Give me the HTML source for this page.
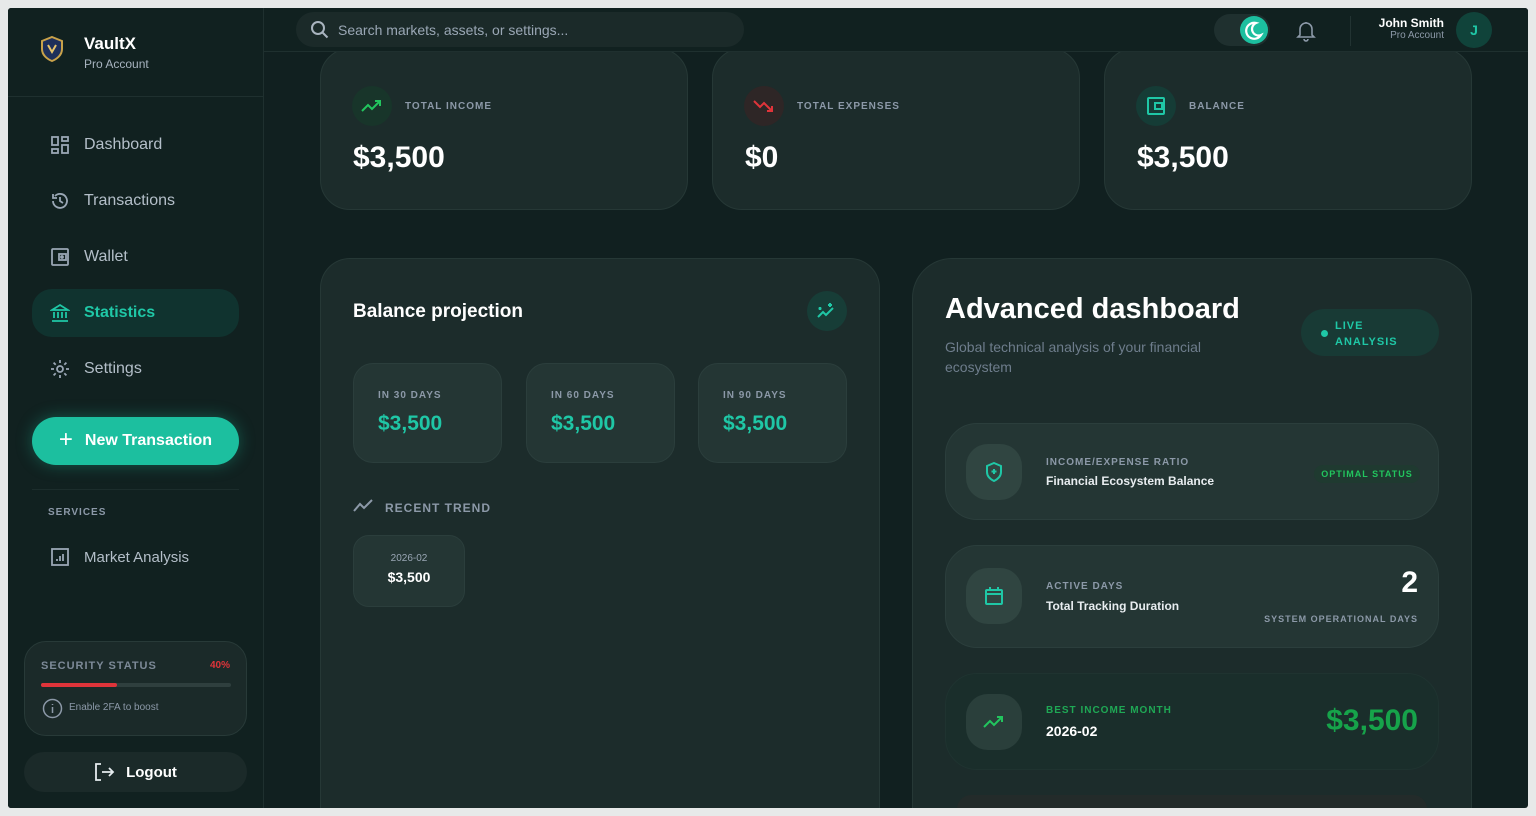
<!DOCTYPE html>
<html><head><meta charset="utf-8"><style>
*{box-sizing:border-box;margin:0;padding:0}
body{width:1536px;height:816px;background:#e7e9e9;font-family:"Liberation Sans",sans-serif;position:relative;overflow:hidden;color:#fff}
.app{position:absolute;left:8px;top:8px;width:1520px;height:800px;background:#112020;overflow:hidden;border-radius:3px}
.a{position:absolute}
.side{left:0;top:0;width:256px;height:800px;background:#112120;border-right:1px solid #1f302f}
.nav{position:absolute;left:24px;width:207px;height:48px;border-radius:20px;display:flex;align-items:center;padding-left:18px;font-size:16px;color:#b4bfc9}
.nav svg{margin-right:14px}
.card{position:absolute;background:#1c2c2b;border:1px solid #263836;border-radius:30px}
.lbl{font-size:10px;font-weight:bold;letter-spacing:1px;color:#8c99a8}
.ic{position:absolute;border-radius:50%;display:flex;align-items:center;justify-content:center}
.sub{position:absolute;background:#243634;border:1px solid #2b3e3c;border-radius:20px}
</style></head><body>
<div class="app">
<div class="a side">
  <svg class="a" style="left:32px;top:28px" width="24" height="26" viewBox="0 0 24 26"><path d="M12 1 L22 5 V13 C22 19 17 23 12 25 C7 23 2 19 2 13 V5Z" fill="#1e2f5a" stroke="#c9a24a" stroke-width="2"/><path d="M8 9 L12 16 L16 9" fill="none" stroke="#e6c36a" stroke-width="2"/></svg>
  <div class="a" style="left:76px;top:26px;font-size:17px;font-weight:bold">VaultX</div>
  <div class="a" style="left:76px;top:49px;font-size:12px;color:#a7b3bf">Pro Account</div>
  <div class="a" style="left:0;top:88px;width:256px;border-top:1px solid #1f302f"></div>
  <div class="nav" style="top:113px"><svg width="20" height="20" viewBox="0 0 20 20" fill="none" stroke="#9aa7b5" stroke-width="1.8"><rect x="2" y="2" width="6" height="8"/><rect x="12" y="2" width="6" height="4"/><rect x="2" y="14" width="6" height="4"/><rect x="12" y="10" width="6" height="8"/></svg>Dashboard</div>
  <div class="nav" style="top:169px"><svg width="20" height="20" viewBox="0 0 20 20" fill="none" stroke="#9aa7b5" stroke-width="1.8"><path d="M3 10a7 7 0 1 0 2-5M3 3v4h4M10 6v4l3 2"/></svg>Transactions</div>
  <div class="nav" style="top:225px"><svg width="20" height="20" viewBox="0 0 20 20" fill="none" stroke="#9aa7b5" stroke-width="1.8"><rect x="2" y="2" width="16" height="16" rx="1"/><rect x="9" y="7" width="7" height="6"/><circle cx="12" cy="10" r="1"/></svg>Wallet</div>
  <div class="nav" style="top:281px;background:#10332f;color:#1fc7a6;font-weight:bold"><svg width="20" height="20" viewBox="0 0 20 20" fill="none" stroke="#1fc7a6" stroke-width="1.8"><path d="M2 7 L10 2 L18 7Z M4 9v6M8 9v6M12 9v6M16 9v6M2 18h16"/></svg>Statistics</div>
  <div class="nav" style="top:337px"><svg width="20" height="20" viewBox="0 0 20 20" fill="none" stroke="#9aa7b5" stroke-width="1.8"><circle cx="10" cy="10" r="3"/><path d="M10 1v3M10 16v3M1 10h3M16 10h3M3.6 3.6l2.1 2.1M14.3 14.3l2.1 2.1M3.6 16.4l2.1-2.1M14.3 5.7l2.1-2.1"/></svg>Settings</div>
  <div class="a" style="left:24px;top:409px;width:207px;height:48px;border-radius:24px;background:#1cbf9f;box-shadow:0 0 16px rgba(28,191,159,.35);display:flex;align-items:center;justify-content:center;font-size:16px;font-weight:bold"><span style="font-size:24px;font-weight:normal;margin-right:12px;margin-top:-3px">+</span>New Transaction</div>
  <div class="a" style="left:24px;top:481px;width:207px;border-top:1px solid #1c2d2c"></div>
  <div class="a lbl" style="left:40px;top:499px;font-size:10px">SERVICES</div>
  <div class="nav" style="top:525px;font-size:15px"><svg width="20" height="20" viewBox="0 0 20 20" fill="none" stroke="#9aa7b5" stroke-width="1.8"><rect x="2" y="2" width="16" height="16"/><path d="M7 14v-2M10 14v-5M13 14V7"/></svg>Market Analysis</div>
  <div class="a" style="left:16px;top:633px;width:223px;height:95px;border-radius:22px;background:#1b2a29;border:1px solid #283a38">
    <div class="a lbl" style="left:16px;top:18px;font-size:11px;color:#7d8a98">SECURITY STATUS</div>
    <div class="a" style="right:16px;top:18px;font-size:10px;font-weight:bold;color:#e0343a">40%</div>
    <div class="a" style="left:16px;top:41px;width:190px;height:4px;border-radius:2px;background:#2f3f3e"><div style="width:40%;height:4px;border-radius:2px;background:#e0343a"></div></div>
    <svg class="a" style="left:17px;top:56px" width="21" height="21" viewBox="0 0 21 21" fill="none" stroke="#8c99a8" stroke-width="1.5"><circle cx="10.5" cy="10.5" r="9"/><path d="M10.5 9v6M10.5 6v1"/></svg>
    <div class="a" style="left:44px;top:60px;font-size:10px;color:#8c99a8">Enable 2FA to boost</div>
  </div>
  <div class="a" style="left:16px;top:744px;width:223px;height:40px;border-radius:20px;background:#1b2a29;display:flex;align-items:center;justify-content:center;font-size:15px;font-weight:bold">
    <svg width="22" height="20" viewBox="0 0 22 20" fill="none" stroke="#e6ecef" stroke-width="1.8" style="margin-right:10px"><path d="M7 2H2v16h5M8 10h11M15 6l4 4-4 4"/></svg>Logout</div>
</div>
<div class="a" style="left:256px;top:0;width:1264px;height:44px;background:#112120;border-bottom:1px solid #1f302f;z-index:2">
  <div class="a" style="left:32px;top:4px;width:448px;height:35px;border-radius:18px;background:#1b2a29;display:flex;align-items:center;padding-left:14px;font-size:14px;color:#9aa7b5">
    <svg width="20" height="20" viewBox="0 0 20 20" fill="none" stroke="#a9b4bf" stroke-width="2" style="margin-right:8px"><circle cx="8" cy="8" r="6"/><path d="M12.5 12.5l5 5"/></svg>Search markets, assets, or settings...</div>
  <div class="a" style="left:950px;top:6px;width:56px;height:32px;border-radius:16px;background:#1f302f"></div>
  <div class="a" style="left:976px;top:8px;width:28px;height:28px;border-radius:50%;background:#1cbf9f"><svg width="28" height="28" viewBox="0 0 28 28"><path d="M16 7a8 8 0 1 0 5 12a6.5 6.5 0 0 1-5-12z" fill="none" stroke="#fff" stroke-width="2.2"/></svg></div>
  <svg class="a" style="left:1032px;top:12px" width="20" height="22" viewBox="0 0 20 22" fill="none" stroke="#8c99a8" stroke-width="1.6"><path d="M4 15V9a6 6 0 0 1 12 0v6l2 2H2z M8 19a2 2 0 0 0 4 0M10 2v1"/></svg>
  <div class="a" style="left:1086px;top:8px;height:30px;border-left:1px solid #223332"></div>
  <div class="a" style="right:84px;top:8px;font-size:12px;font-weight:bold;text-align:right">John Smith</div>
  <div class="a" style="right:84px;top:22px;font-size:10px;color:#8c99a8;text-align:right">Pro Account</div>
  <div class="a" style="left:1192px;top:4px;width:36px;height:36px;border-radius:50%;background:#10433a;color:#1fc7a6;font-weight:bold;font-size:14px;display:flex;align-items:center;justify-content:center">J</div>
</div>
<div class="card" style="left:312px;top:40px;width:368px;height:162px">
  <div class="ic" style="left:31px;top:37px;width:40px;height:40px;background:#18352a"><svg width="22" height="14" viewBox="0 0 22 14" fill="none" stroke="#22c55e" stroke-width="2"><path d="M1 12l6-6 4 4 8-8M14 2h5v5"/></svg></div>
  <div class="a lbl" style="left:84px;top:52px">TOTAL INCOME</div>
  <div class="a" style="left:32px;top:92px;font-size:30px;font-weight:bold">$3,500</div>
</div>
<div class="card" style="left:704px;top:40px;width:368px;height:162px">
  <div class="ic" style="left:31px;top:37px;width:40px;height:40px;background:#2e2626"><svg width="22" height="14" viewBox="0 0 22 14" fill="none" stroke="#e0343a" stroke-width="2"><path d="M1 2l6 6 4-4 8 8M14 12h5V7"/></svg></div>
  <div class="a lbl" style="left:84px;top:52px">TOTAL EXPENSES</div>
  <div class="a" style="left:32px;top:92px;font-size:30px;font-weight:bold">$0</div>
</div>
<div class="card" style="left:1096px;top:40px;width:368px;height:162px">
  <div class="ic" style="left:31px;top:37px;width:40px;height:40px;background:#153c36"><svg width="20" height="20" viewBox="0 0 20 20" fill="none" stroke="#1fc7a6" stroke-width="2"><rect x="2" y="2" width="16" height="16" rx="1"/><rect x="9" y="7" width="7" height="6"/></svg></div>
  <div class="a lbl" style="left:84px;top:52px">BALANCE</div>
  <div class="a" style="left:32px;top:92px;font-size:30px;font-weight:bold">$3,500</div>
</div>
<div class="card" style="left:312px;top:250px;width:560px;height:550px;border-bottom:none;border-radius:30px 30px 0 0">
  <div class="a" style="left:32px;top:42px;font-size:19px;font-weight:bold">Balance projection</div>
  <div class="ic" style="left:486px;top:32px;width:40px;height:40px;background:#173d37"><svg width="22" height="20" viewBox="0 0 22 20" fill="none" stroke="#1fc7a6" stroke-width="2"><path d="M2 16l5-5 3 3 7-7M14 2v4M12 4h4M4 6v3M2.5 7.5h3"/></svg></div>
  <div class="sub" style="left:32px;top:104px;width:149px;height:100px"><div class="a lbl" style="left:24px;top:26px">IN 30 DAYS</div><div class="a" style="left:24px;top:48px;font-size:21px;font-weight:bold;color:#1fc7a6">$3,500</div></div>
  <div class="sub" style="left:205px;top:104px;width:149px;height:100px"><div class="a lbl" style="left:24px;top:26px">IN 60 DAYS</div><div class="a" style="left:24px;top:48px;font-size:21px;font-weight:bold;color:#1fc7a6">$3,500</div></div>
  <div class="sub" style="left:377px;top:104px;width:149px;height:100px"><div class="a lbl" style="left:24px;top:26px">IN 90 DAYS</div><div class="a" style="left:24px;top:48px;font-size:21px;font-weight:bold;color:#1fc7a6">$3,500</div></div>
  <svg class="a" style="left:32px;top:240px" width="22" height="14" viewBox="0 0 22 14" fill="none" stroke="#8c99a8" stroke-width="2"><path d="M1 12l6-7 4 4 8-8"/></svg>
  <div class="a lbl" style="left:64px;top:242px;font-size:12px">RECENT TREND</div>
  <div class="sub" style="left:32px;top:276px;width:112px;height:72px;border-radius:16px;text-align:center"><div style="margin-top:17px;font-size:10px;color:#9aa7b5">2026-02</div><div style="margin-top:5px;font-size:14px;font-weight:bold">$3,500</div></div>
</div>
<div class="card" style="left:904px;top:250px;width:560px;height:550px;border-bottom:none;border-radius:40px 40px 0 0">
  <div class="a" style="left:32px;top:34px;font-size:29px;font-weight:bold">Advanced dashboard</div>
  <div class="a" style="left:32px;top:78px;width:300px;font-size:14px;line-height:20px;color:#6e7d8c">Global technical analysis of your financial ecosystem</div>
  <div class="a" style="left:388px;top:50px;width:138px;height:47px;border-radius:24px;background:#183a35"><div class="a" style="left:20px;top:21px;width:7px;height:7px;border-radius:50%;background:#1fc7a6"></div><div class="a" style="left:34px;top:9px;font-size:11px;line-height:16px;font-weight:bold;letter-spacing:1px;color:#1fc7a6">LIVE<br>ANALYSIS</div></div>
  <div class="sub" style="left:32px;top:164px;width:494px;height:97px;border-radius:32px">
    <div class="ic" style="left:20px;top:20px;width:56px;height:56px;border-radius:22px;background:#304541"><svg width="18" height="20" viewBox="0 0 18 20" fill="none" stroke="#1fc7a6" stroke-width="2"><path d="M9 1l7 3v6c0 4-3 7-7 9c-4-2-7-5-7-9V4z M9 7v5M6.5 9.5h5"/></svg></div>
    <div class="a lbl" style="left:100px;top:33px">INCOME/EXPENSE RATIO</div>
    <div class="a" style="left:100px;top:50px;font-size:12px;font-weight:bold;color:#e8edf0">Financial Ecosystem Balance</div>
    <div class="a" style="left:368px;top:41px;width:106px;height:18px;border-radius:9px;background:#1f3a30;font-size:9px;font-weight:bold;letter-spacing:1px;color:#22c55e;text-align:center;line-height:18px">OPTIMAL STATUS</div>
  </div>
  <div class="sub" style="left:32px;top:286px;width:494px;height:103px;border-radius:32px">
    <div class="ic" style="left:20px;top:22px;width:56px;height:56px;border-radius:22px;background:#304541"><svg width="20" height="20" viewBox="0 0 20 20" fill="none" stroke="#1fc7a6" stroke-width="2"><rect x="2" y="4" width="16" height="14" rx="1"/><path d="M2 8h16M6 1v4M14 1v4"/></svg></div>
    <div class="a lbl" style="left:100px;top:35px">ACTIVE DAYS</div>
    <div class="a" style="left:100px;top:53px;font-size:12px;font-weight:bold;color:#e8edf0">Total Tracking Duration</div>
    <div class="a" style="right:20px;top:20px;font-size:30px;font-weight:bold">2</div>
    <div class="a lbl" style="right:20px;top:68px;font-size:9px">SYSTEM OPERATIONAL DAYS</div>
  </div>
  <div class="sub" style="left:32px;top:414px;width:494px;height:97px;border-radius:32px;background:#1a2e2b;border-color:#1f3330">
    <div class="ic" style="left:20px;top:20px;width:56px;height:56px;border-radius:22px;background:#2a3f3b"><svg width="22" height="14" viewBox="0 0 22 14" fill="none" stroke="#22c55e" stroke-width="2"><path d="M1 12l6-6 4 4 8-8M14 2h5v5"/></svg></div>
    <div class="a lbl" style="left:100px;top:31px;color:#1fa855">BEST INCOME MONTH</div>
    <div class="a" style="left:100px;top:49px;font-size:14px;font-weight:bold">2026-02</div>
    <div class="a" style="right:20px;top:30px;font-size:30px;font-weight:bold;color:#16a34a">$3,500</div>
  </div>
  <div class="a" style="left:44px;top:536px;width:470px;height:14px;border-radius:14px 14px 0 0;background:#232b2a"></div>
</div>
</div>
</body></html>
